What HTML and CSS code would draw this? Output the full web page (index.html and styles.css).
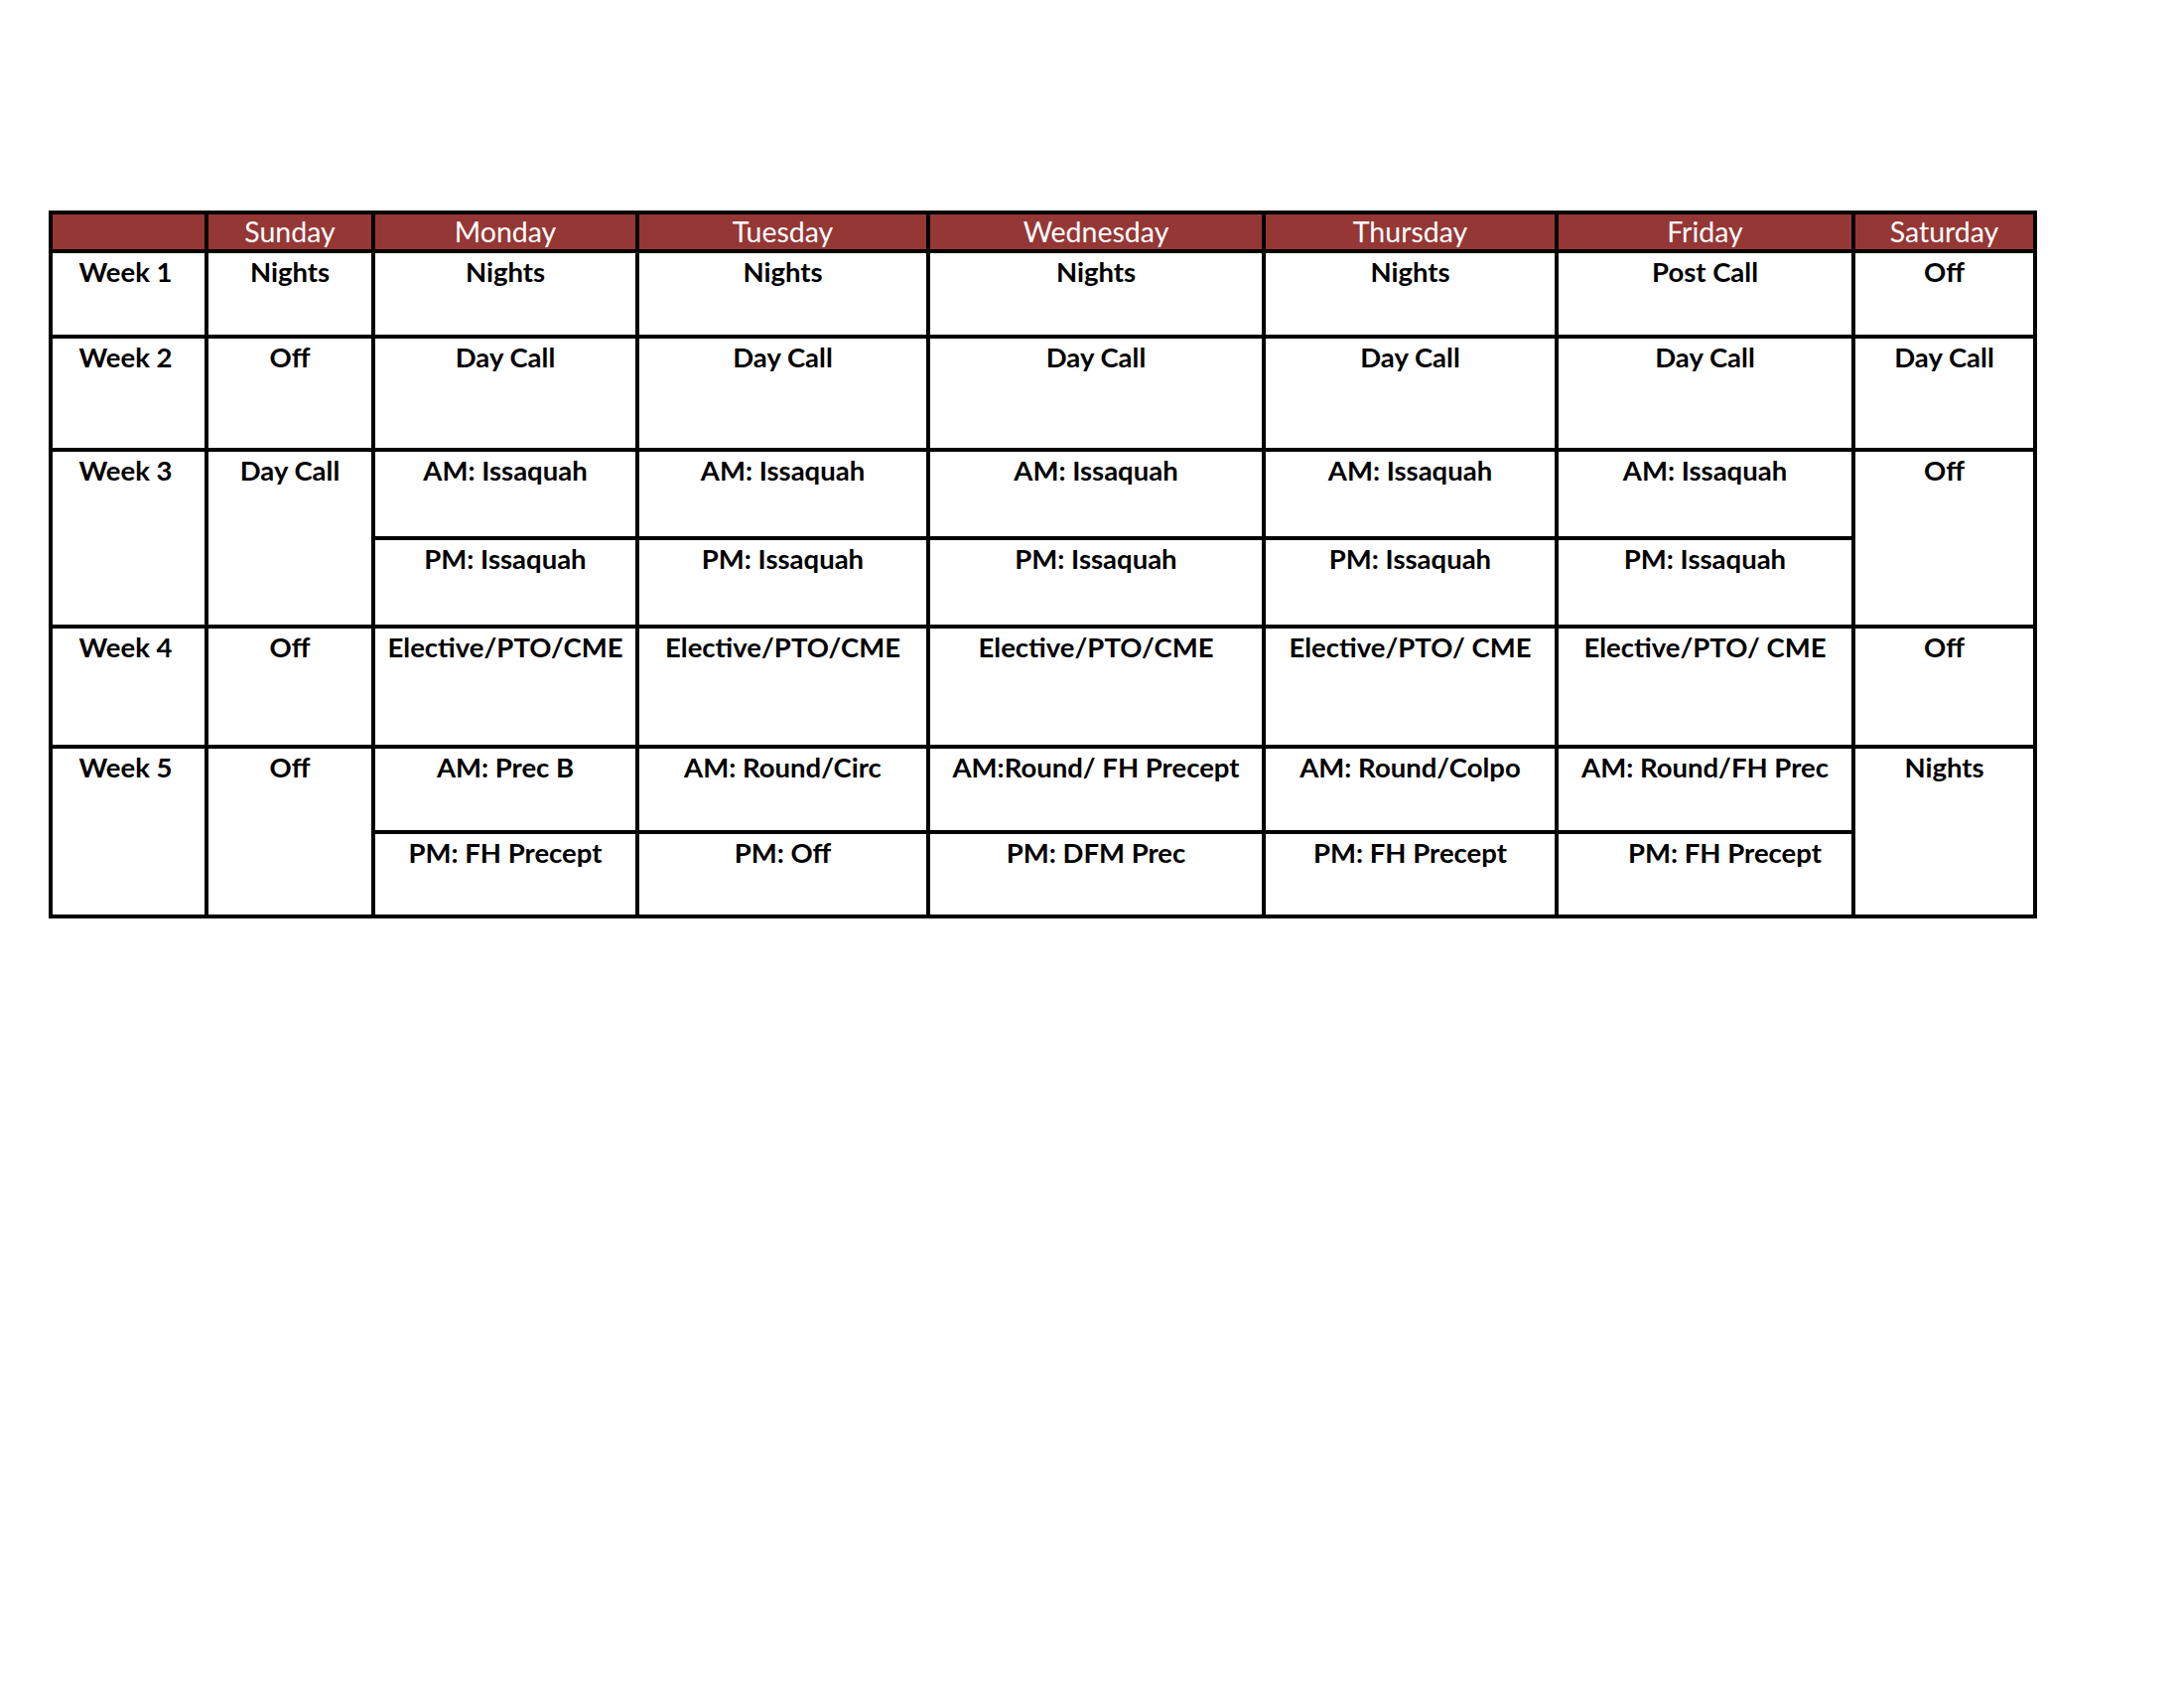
FILE: index.html
```html
<!DOCTYPE html>
<html>
<head>
<meta charset="utf-8">
<link rel="stylesheet" href="styles.css">
</head>
<body>
<div class="page">
  <div class="schedule">
    <div class="hd"></div>
    <div class="hd">Sunday</div>
    <div class="hd">Monday</div>
    <div class="hd">Tuesday</div>
    <div class="hd">Wednesday</div>
    <div class="hd">Thursday</div>
    <div class="hd">Friday</div>
    <div class="hd">Saturday</div>

    <div class="c wk">Week 1</div>
    <div class="c">Nights</div>
    <div class="c">Nights</div>
    <div class="c">Nights</div>
    <div class="c">Nights</div>
    <div class="c">Nights</div>
    <div class="c">Post Call</div>
    <div class="c">Off</div>

    <div class="c wk">Week 2</div>
    <div class="c">Off</div>
    <div class="c">Day Call</div>
    <div class="c">Day Call</div>
    <div class="c">Day Call</div>
    <div class="c">Day Call</div>
    <div class="c">Day Call</div>
    <div class="c">Day Call</div>

    <div class="c wk span">Week 3</div>
    <div class="c span">Day Call</div>
    <div class="c">AM: Issaquah</div>
    <div class="c">AM: Issaquah</div>
    <div class="c">AM: Issaquah</div>
    <div class="c">AM: Issaquah</div>
    <div class="c">AM: Issaquah</div>
    <div class="c span">Off</div>
    <div class="c">PM: Issaquah</div>
    <div class="c">PM: Issaquah</div>
    <div class="c">PM: Issaquah</div>
    <div class="c">PM: Issaquah</div>
    <div class="c">PM: Issaquah</div>

    <div class="c wk">Week 4</div>
    <div class="c">Off</div>
    <div class="c">Elective/PTO/CME</div>
    <div class="c">Elective/PTO/CME</div>
    <div class="c">Elective/PTO/CME</div>
    <div class="c">Elective/PTO/ CME</div>
    <div class="c">Elective/PTO/ CME</div>
    <div class="c">Off</div>

    <div class="c wk span">Week 5</div>
    <div class="c span">Off</div>
    <div class="c">AM: Prec B</div>
    <div class="c">AM: Round/Circ</div>
    <div class="c">AM:Round/ FH Precept</div>
    <div class="c">AM: Round/Colpo</div>
    <div class="c">AM: Round/FH Prec</div>
    <div class="c span">Nights</div>
    <div class="c">PM: FH Precept</div>
    <div class="c">PM: Off</div>
    <div class="c">PM: DFM Prec</div>
    <div class="c">PM: FH Precept</div>
    <div class="c shift">PM: FH Precept</div>
  </div>
</div>
</body>
</html>
```
FILE: styles.css
```css
html, body {
  margin: 0;
  padding: 0;
  background: #fff;
}

.page {
  padding: 212px 0 0 49px;
}

.schedule {
  display: grid;
  width: max-content;
  grid-template-columns: 153px 164px 262px 289px 334px 291px 295px 179px;
  grid-template-rows: 35px 82px 110px 85px 85px 117px 82px 81px;
  gap: 4px;
  padding: 4px;
  background: #000;
  font-family: Lato, "Open Sans", sans-serif;
  color: #000;
}

.hd {
  background: #953735;
  color: #fff;
  font-size: 28.5px;
  font-weight: 400;
  display: flex;
  align-items: center;
  justify-content: center;
  line-height: 1;
}

.c {
  background: #fff;
  font-size: 27.5px;
  font-weight: 700;
  text-align: center;
  line-height: 1;
  padding-top: 5px;
  box-sizing: border-box;
  white-space: nowrap;
}

.wk {
  padding-right: 6px;
}

.span {
  grid-row: span 2;
}

.shift {
  padding-left: 40px;
}
```
